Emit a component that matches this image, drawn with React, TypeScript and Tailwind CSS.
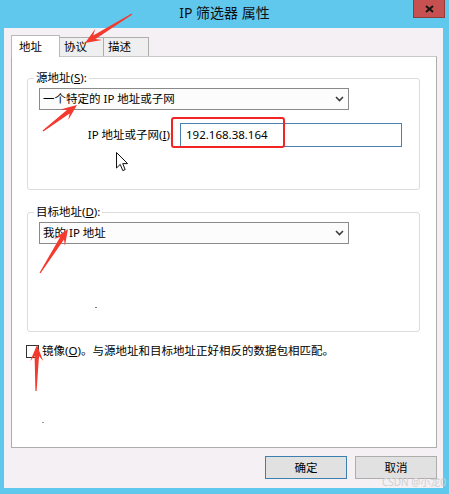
import React from "react";

const font = "font-['Noto_Sans','Noto_Sans_CJK_SC',sans-serif]";

type Pt = [number, number];

// tapered annotation arrow, tail -> tip
function arrowPoints(tail: Pt, tip: Pt) {
  const [x1, y1] = tail;
  const [x2, y2] = tip;
  const len = Math.hypot(x2 - x1, y2 - y1);
  const dx = (x2 - x1) / len;
  const dy = (y2 - y1) / len;
  const nx = -dy;
  const ny = dx;
  const L = 16;
  const W = 6.5;
  const neck = 11;
  const p = (d: number, w: number) =>
    `${(x2 - dx * d + nx * w).toFixed(1)},${(y2 - dy * d + ny * w).toFixed(1)}`;
  return [p(len, 0.6), p(neck, 2.2), p(L, W), p(0, 0), p(L, -W), p(neck, -2.2), p(len, -0.6)].join(" ");
}

const arrows: [Pt, Pt][] = [
  [[132, 14], [85, 43]],
  [[43, 131], [77, 105]],
  [[40, 273], [68, 229]],
  [[36, 391], [37, 345]],
];

function Chevron() {
  return (
    <svg width="9" height="6" viewBox="0 0 9 6">
      <path d="M1 1 L4.5 4.5 L8 1" fill="none" stroke="#3c3c3c" strokeWidth="1.6" />
    </svg>
  );
}

function Select({ value }: { value: string }) {
  return (
    <div className="flex h-[22px] w-[310px] items-center justify-between border border-[#8a8a8a] bg-[#fcfcfc] pl-[3px] pr-[4px]">
      <span className="text-[11.5px] leading-none text-black">{value}</span>
      <Chevron />
    </div>
  );
}

function Group({ label, children, className }: { label: React.ReactNode; children: React.ReactNode; className?: string }) {
  return (
    <fieldset className={`w-[393px] rounded-[3px] border border-[#dcdcdc] px-[6px] ${className ?? ""}`}>
      <legend className="px-[2px] text-[11.5px] leading-[16px] text-black">{label}</legend>
      <div className="ml-[5px]">{children}</div>
    </fieldset>
  );
}

export default function App() {
  return (
    <div className={`relative h-[494px] w-[449px] overflow-hidden bg-[#60c8ec] ${font}`}>
      {/* title bar */}
      <div className="grid h-[28px] grid-cols-[1fr_auto_1fr] items-start">
        <div />
        <div className="text-[14px] leading-[26px] text-[#111]">IP 筛选器 属性</div>
        <button className="mr-[4px] flex h-[18px] w-[32px] items-center justify-center justify-self-end border border-t-0 border-[#8f3b3b] bg-[#c75050]">
          <svg width="9" height="8" viewBox="0 0 9 8">
            <path d="M1 1 L8 7 M8 1 L1 7" stroke="#141414" strokeWidth="2" />
          </svg>
        </button>
      </div>

      {/* dialog body */}
      <div className="ml-[4px] h-[460px] w-[439px] bg-[#f5f0f4] px-[7px] pt-[7px]">
        <div className="flex items-end">
          <div className="relative z-10 -mb-px h-[22px] w-[49px] border border-b-0 border-[#b9b9b9] bg-white pl-[7px] pt-[3px] text-[11.5px] leading-[16px] text-black">
            地址
          </div>
          <div className="h-[19px] w-[44px] border-t border-r border-[#adadad] bg-[#efefef] pl-[4px] pt-[1px] text-[11.5px] leading-[16px] text-black">
            协议
          </div>
          <div className="h-[19px] w-[45px] border-t border-r border-[#adadad] bg-[#efefef] pl-[4px] pt-[1px] text-[11.5px] leading-[16px] text-black">
            描述
          </div>
        </div>

        <div className="relative h-[392px] w-[426px] border border-[#adadad] border-t-[#c9c9c9] bg-white pl-[15px] pt-[13px]">
          <Group label={<>源地址(<span className="underline">S</span>):</>} className="pb-[42px]">
            <div className="mt-[2px]">
              <Select value="一个特定的 IP 地址或子网" />
            </div>
            <div className="mt-[13px] mr-[11px] flex items-center justify-end">
              <span className="mr-[7px] text-[11.5px] text-black">
                IP 地址或子网(<span className="underline">I</span>):
              </span>
              <div className="flex h-[24px] w-[222px] items-center border border-[#4a7fb0] bg-white pl-[5px] text-[11.5px] text-black">
                192.168.38.164
              </div>
            </div>
          </Group>

          <Group label={<>目标地址(<span className="underline">D</span>):</>} className="mt-[14px] pb-[87px]">
            <div className="mt-[2px]">
              <Select value="我的 IP 地址" />
            </div>
          </Group>

          <label className="mt-[12px] -ml-px flex items-center">
            <span className="h-[13px] w-[13px] border border-[#333] bg-white" />
            <span className="ml-[3px] text-[11.5px] leading-[14px] text-black">
              镜像(<span className="underline">O</span>)。与源地址和目标地址正好相反的数据包相匹配。
            </span>
          </label>
        </div>

        <div className="mt-[8px] flex w-[426px] justify-end gap-[8px]">
          <button className="h-[23px] w-[82px] border border-[#3c7fb1] bg-[#e1e1e1] text-[11.5px] text-black">确定</button>
          <button className="h-[23px] w-[82px] border border-[#adadad] bg-[#e1e1e1] text-[11.5px] text-black">取消</button>
        </div>
      </div>

      {/* annotations and overlays */}
      <div className="absolute left-[171px] top-[117px] h-[31px] w-[114px] rounded-[3px] border-[2.5px] border-[#f22424]" />
      <svg className="pointer-events-none absolute left-[116px] top-[152px]" width="13" height="21" viewBox="0 0 13 21">
        <path d="M0.5 0.5 L0.5 16 L4.2 12.4 L6.8 18.6 L9.2 17.6 L6.7 11.6 L11.6 11.6 Z" fill="white" stroke="#111" strokeWidth="1" />
      </svg>
      <span className="absolute left-[95px] top-[307px] h-px w-[2px] bg-[#777]" />
      <span className="absolute left-[42px] top-[422px] h-px w-[2px] bg-[#999]" />
      <svg className="pointer-events-none absolute left-0 top-0" width="449" height="494">
        {arrows.map(([a, b], i) => (
          <polygon key={i} points={arrowPoints(a, b)} fill="#f43a2e" />
        ))}
      </svg>
      <span className="absolute left-[382px] top-[475px] whitespace-nowrap text-[10px] leading-[14px] text-[#cfcfcf]">CSDN @小龙0</span>
    </div>
  );
}
